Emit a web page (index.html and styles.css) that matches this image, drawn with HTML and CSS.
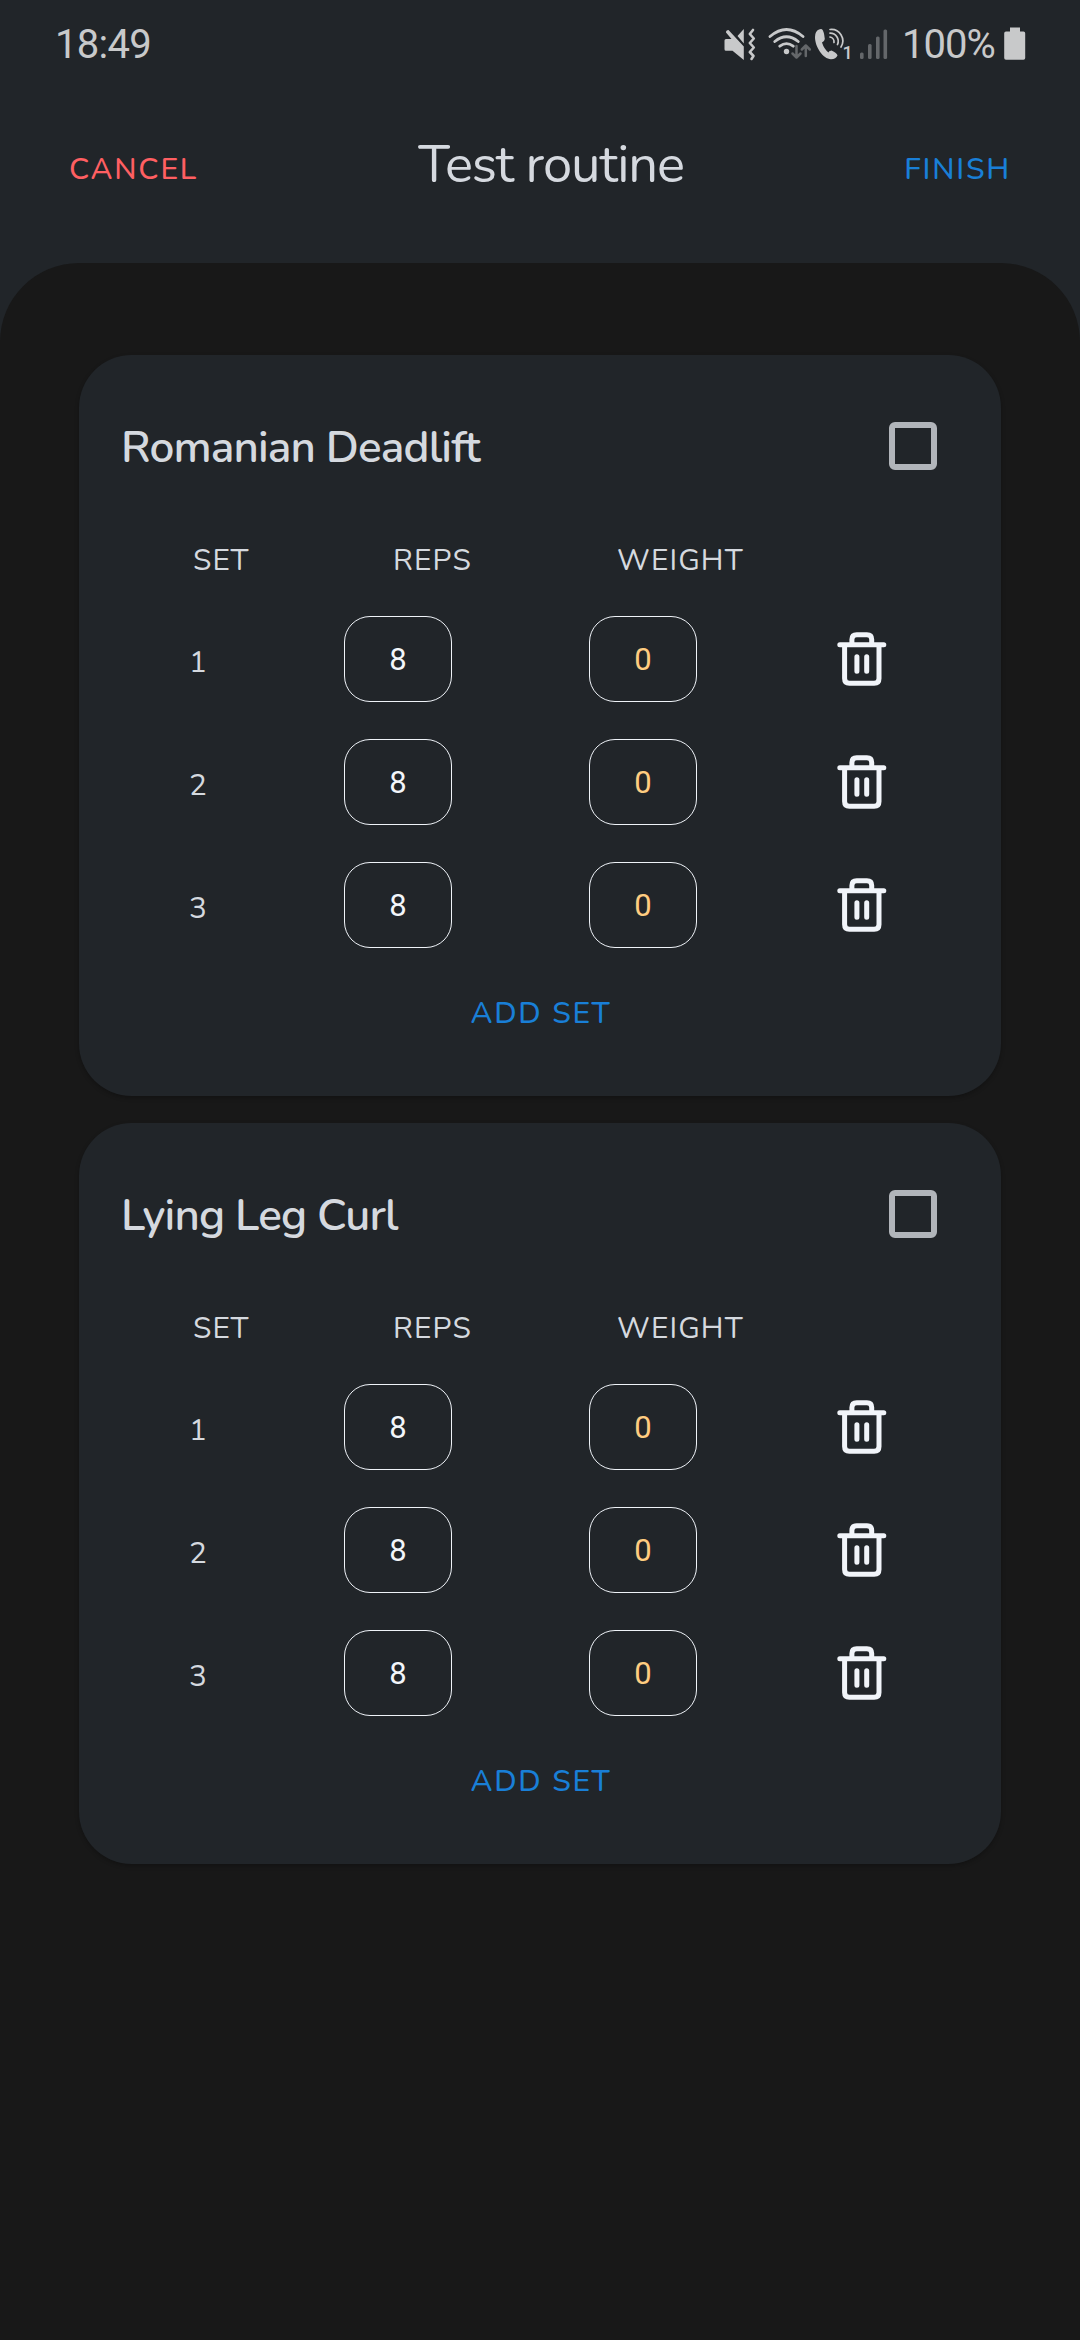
FILE: index.html
```html
<!DOCTYPE html>
<html lang="en">
<head>
<meta charset="utf-8">
<title>Test routine</title>
<link rel="stylesheet" href="styles.css">
</head>
<body>
<svg class="defs" width="0" height="0" aria-hidden="true">
  <symbol id="trash" viewBox="0 0 50 54">
    <g fill="none" stroke="currentColor" stroke-width="5" stroke-linecap="round" stroke-linejoin="round">
      <path d="M2.8 12.7H46.8M7.6 12.7V46.4Q7.6 51.2 12.4 51.2H37.2Q42 51.2 42 46.4V12.7M14.9 12.7V7.6Q14.9 2.8 19.7 2.8H29.9Q34.7 2.8 34.7 7.6V12.7M19.9 24.8V39.2M29.7 24.8V39.2"/>
    </g>
  </symbol>
</svg>

<div class="status">
  <span class="time">18:49</span>
  <svg class="status-icons" width="180" height="40" viewBox="720 22 180 40">
    <g class="lit">
      <path d="M724.500 38.500Q724.500 37 726 37H731.500L726 30.500Q725.800 28 728.500 28L743.800 44.500V58L732.500 48.800H726Q724.500 48.800 724.500 47.300ZM743.800 27V41.500L737.500 34Z"/>
      <path class="line" d="M753 28L749.800 32 753.800 36.500 749.800 41 753.800 45.500 749.800 50 753.500 54 751.500 57" stroke-width="2.600"/>
      <path class="line" d="M770 34.500Q786.500 20.500 803 34.500M774.800 39.500Q786.500 30 798.200 39.500M779.800 44.200Q786.500 39 793.200 44.200" stroke-width="2.800"/>
      <circle cx="786.500" cy="49.500" r="2.700"/>
      <path d="M819 27.500Q815 29 815 35C815 45 823 57 831 57.200Q836 57 837.500 53.500Q837 51 831.500 48.500Q828.500 49 828.500 50.500Q824 47 822 40.500Q824.500 39.500 824.800 37Q824 29 822 27.200Q820.500 26.800 819 27.500Z"/>
      <path class="line" d="M830 27.500A11.500 11.500 0 0 1 841 45M830 31.200A8 8 0 0 1 837.500 42.500M830 35A5 5 0 0 1 834 40.500" stroke-width="1.700"/>
    </g>
    <g class="dim">
      <path class="line" d="M796.500 44V55M792.500 51.500L796.500 55.500 800.500 51.500M805.800 54V44M801.800 47.500L805.800 43.500 809.800 47.500" stroke-width="2.500"/>
      <rect x="860" y="50.500" width="3.600" height="6.500" rx="1.500"/>
      <rect x="868" y="42" width="3.600" height="15" rx="1.500"/>
      <rect x="876" y="34.500" width="3.600" height="22.500" rx="1.500"/>
      <rect x="883.500" y="27.500" width="3.600" height="29.500" rx="1.500"/>
    </g>
    <text class="sim" x="842.500" y="56.500">1</text>
  </svg>
  <span class="percent">100%</span>
  <svg class="battery" width="22" height="34" viewBox="0 0 22 34"><path d="M6 .5H16V4.500H19.500Q21.200 4.500 21.200 6.200V31Q21.200 32.800 19.500 32.800H2Q.2 32.800 .2 31V6.200Q.2 4.500 2 4.500H6Z"/></svg>
</div>

<header class="header">
  <span class="action cancel">CANCEL</span>
  <h1 class="title">Test routine</h1>
  <span class="action finish">FINISH</span>
</header>

<main class="sheet">
  <section class="card">
    <div class="card-head"><h2 class="name">Romanian Deadlift</h2><span class="check"></span></div>
    <div class="labels"><span>SET</span><span>REPS</span><span>WEIGHT</span></div>
    <div class="rows">
      <div class="row"><span class="num">1</span><span class="field">8</span><span class="field weight">0</span><svg class="trash"><use href="#trash"/></svg></div>
      <div class="row"><span class="num">2</span><span class="field">8</span><span class="field weight">0</span><svg class="trash"><use href="#trash"/></svg></div>
      <div class="row"><span class="num">3</span><span class="field">8</span><span class="field weight">0</span><svg class="trash"><use href="#trash"/></svg></div>
    </div>
    <div class="add">ADD SET</div>
  </section>
  <section class="card">
    <div class="card-head"><h2 class="name">Lying Leg Curl</h2><span class="check"></span></div>
    <div class="labels"><span>SET</span><span>REPS</span><span>WEIGHT</span></div>
    <div class="rows">
      <div class="row"><span class="num">1</span><span class="field">8</span><span class="field weight">0</span><svg class="trash"><use href="#trash"/></svg></div>
      <div class="row"><span class="num">2</span><span class="field">8</span><span class="field weight">0</span><svg class="trash"><use href="#trash"/></svg></div>
      <div class="row"><span class="num">3</span><span class="field">8</span><span class="field weight">0</span><svg class="trash"><use href="#trash"/></svg></div>
    </div>
    <div class="add">ADD SET</div>
  </section>
</main>
</body>
</html>
```
FILE: styles.css
```css
* { box-sizing: border-box; }
body {
  margin: 0;
  min-height: 2340px;
  display: flex;
  flex-direction: column;
  background: #212529;
  color: #d5d9df;
  font-family: Nunito, Lato, sans-serif;
}
.defs { display: none; }
h1, h2 { margin: 0; }

.status {
  height: 84px;
  padding: 4px 54px 0 55px;
  display: flex;
  align-items: center;
  color: #c8c9ca;
  font: 40px/40px Roboto, sans-serif;
  letter-spacing: -.7px;
}
.time { padding-top: 2px; }
.status-icons { margin-left: auto; }
.lit { fill: #c8c9ca; stroke: none; }
.dim { fill: #64676a; }
.line { fill: none; stroke: #c8c9ca; stroke-linecap: round; stroke-linejoin: round; }
.dim .line { stroke: #64676a; }
.sim { font: 500 18px Roboto, sans-serif; fill: #c8c9ca; }
.percent { width: 104px; padding: 2px 0 0 2px; letter-spacing: -1px; }
.battery { fill: #c8c9ca; }

.header {
  height: 179px;
  padding: 0 69px;
  display: flex;
  align-items: flex-start;
  justify-content: space-between;
}
.action { margin-top: 68px; }
.action, .add { font-size: 30px; line-height: 36px; font-weight: 500; letter-spacing: 1.8px; }
.cancel { color: #ff5f62; }
.finish, .add { color: #197fd7; }
.title { margin-top: 51px; font-size: 52.5px; line-height: 60px; font-weight: 400; letter-spacing: -1.05px; }

.sheet {
  flex: 1;
  padding: 92px 79px 0;
  display: flex;
  flex-direction: column;
  gap: 27px;
  background: #181818;
  border-radius: 79px 79px 0 0;
}
.card {
  height: 741px;
  padding-top: 60px;
  background: #212529;
  border-radius: 52.5px;
  box-shadow: 0 2px 4px rgba(0, 0, 0, .25);
}
.card-head {
  height: 62px;
  padding: 0 64px 0 42px;
  display: flex;
  align-items: center;
  justify-content: space-between;
}
.name { padding-top: 3px; font-size: 44px; line-height: 60px; font-weight: 600; letter-spacing: -.85px; }
.check { width: 48px; height: 48px; border: 6px solid #b1b5ba; border-radius: 6px; }
.labels {
  margin-top: 66px;
  padding-left: 114px;
  display: grid;
  grid-template-columns: 200px 224px auto;
  font-size: 29.8px;
  line-height: 36px;
  letter-spacing: 1.1px;
}
.rows { margin-top: 37px; display: grid; gap: 37px; }
.row {
  height: 86px;
  display: grid;
  grid-template-columns: 265px 245px 248px auto;
  align-items: center;
}
.num { padding: 8px 0 0 110px; font-size: 29.8px; line-height: 36px; }
.field {
  width: 108px;
  height: 86px;
  border: 1.3px solid #eff3f8;
  border-radius: 26px;
  padding-top: 1px;
  color: #f3f6fa;
  font: 31px/84px Roboto, sans-serif;
  text-align: center;
}
.weight { color: #ffcc80; }
.trash { width: 50px; height: 54px; color: #f1f4f9; }
.add { margin-top: 48px; padding-left: 2px; text-align: center; }
```
